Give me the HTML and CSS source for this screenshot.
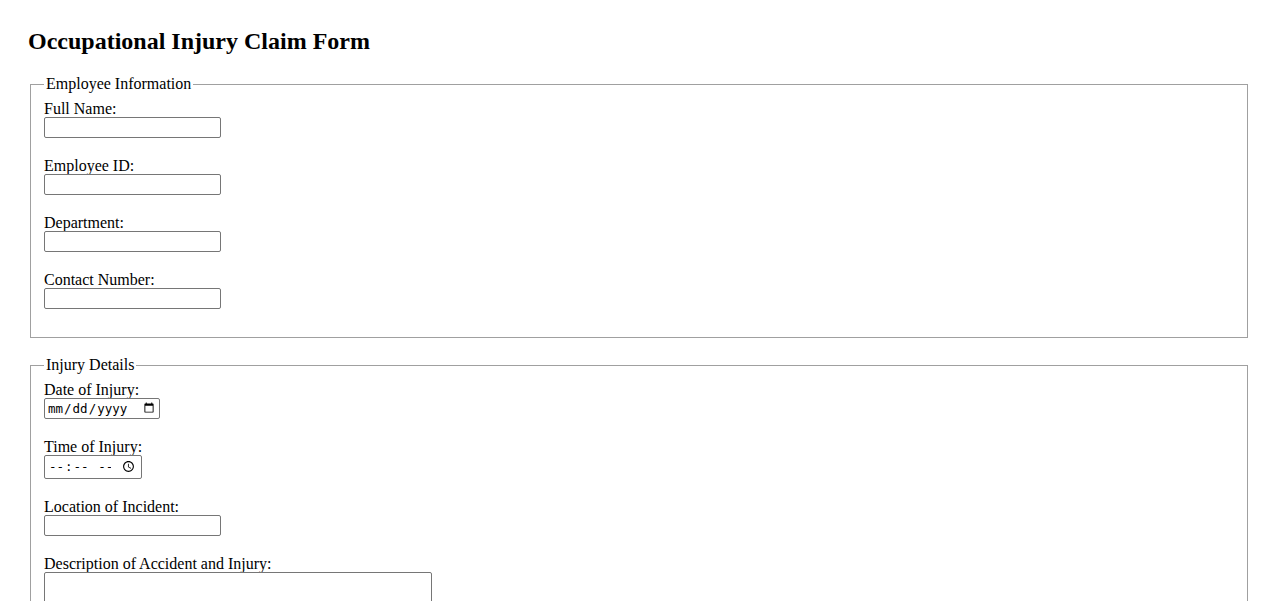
FILE: index.html
```html
<!DOCTYPE html>
<html lang="en">
<head>
<meta charset="utf-8">
<title>Occupational Injury Claim Form</title>
<link rel="stylesheet" href="styles.css">
</head>
<body>
<h2 class="title">Occupational Injury Claim Form</h2>
<form class="claim-form">
  <fieldset class="section">
    <legend class="section-legend">Employee Information</legend>
    <div class="field">
      <label class="field-label" for="name">Full Name:</label>
      <input class="text-input" type="text" id="name">
    </div>
    <div class="field">
      <label class="field-label" for="empid">Employee ID:</label>
      <input class="text-input" type="text" id="empid">
    </div>
    <div class="field">
      <label class="field-label" for="dept">Department:</label>
      <input class="text-input" type="text" id="dept">
    </div>
    <div class="field">
      <label class="field-label" for="phone">Contact Number:</label>
      <input class="text-input" type="text" id="phone">
    </div>
  </fieldset>
  <fieldset class="section">
    <legend class="section-legend">Injury Details</legend>
    <div class="field">
      <label class="field-label" for="date">Date of Injury:</label>
      <input class="date-input" type="date" id="date">
    </div>
    <div class="field">
      <label class="field-label" for="time">Time of Injury:</label>
      <input class="time-input" type="time" id="time">
    </div>
    <div class="field">
      <label class="field-label" for="loc">Location of Incident:</label>
      <input class="text-input" type="text" id="loc">
    </div>
    <div class="field">
      <label class="field-label" for="desc">Description of Accident and Injury:</label>
      <textarea class="text-area" id="desc" rows="5" cols="50"></textarea>
    </div>
  </fieldset>
</form>
</body>
</html>
```

FILE: styles.css
```css
body {
  margin: 28px;
  font-family: "Liberation Serif", "Times New Roman", serif;
  font-size: 16px;
  color: #000;
  background: #fff;
}
.title {
  font-size: 24px;
  font-weight: bold;
  margin: 0 0 19.9px 0;
  line-height: 27.6px;
}
.claim-form {
  display: block;
}
.section {
  margin: 0 2px 18px 2px;
  padding: 6.4px 13px 8.7px 13px;
  border: 1px solid #a0a0a0;
}
.section-legend {
  padding: 0 2px;
  line-height: 18.4px;
}
.field {
  display: flex;
  flex-direction: column;
  align-items: flex-start;
  margin-bottom: 19px;
}
.field-label {
  display: block;
  line-height: 17px;
}
.text-input {
  box-sizing: border-box;
  width: 177px;
  height: 21px;
  margin: 0;
  border: 1px solid #767676;
  border-radius: 2px;
}
.date-input {
  box-sizing: border-box;
  width: 116px;
  height: 21px;
  margin: 0;
  padding: 1px 2px;
  font-size: 12.5px;
  border: 1px solid #767676;
  border-radius: 2px;
}
.time-input {
  box-sizing: border-box;
  width: 98px;
  height: 24px;
  margin: 0;
  padding: 1px 3px;
  font-size: 12.5px;
  border: 1px solid #767676;
  border-radius: 2px;
}
.text-area {
  box-sizing: border-box;
  width: 388px;
  height: 100px;
  margin: 0;
  border: 1px solid #767676;
  border-radius: 2px;
}
```
